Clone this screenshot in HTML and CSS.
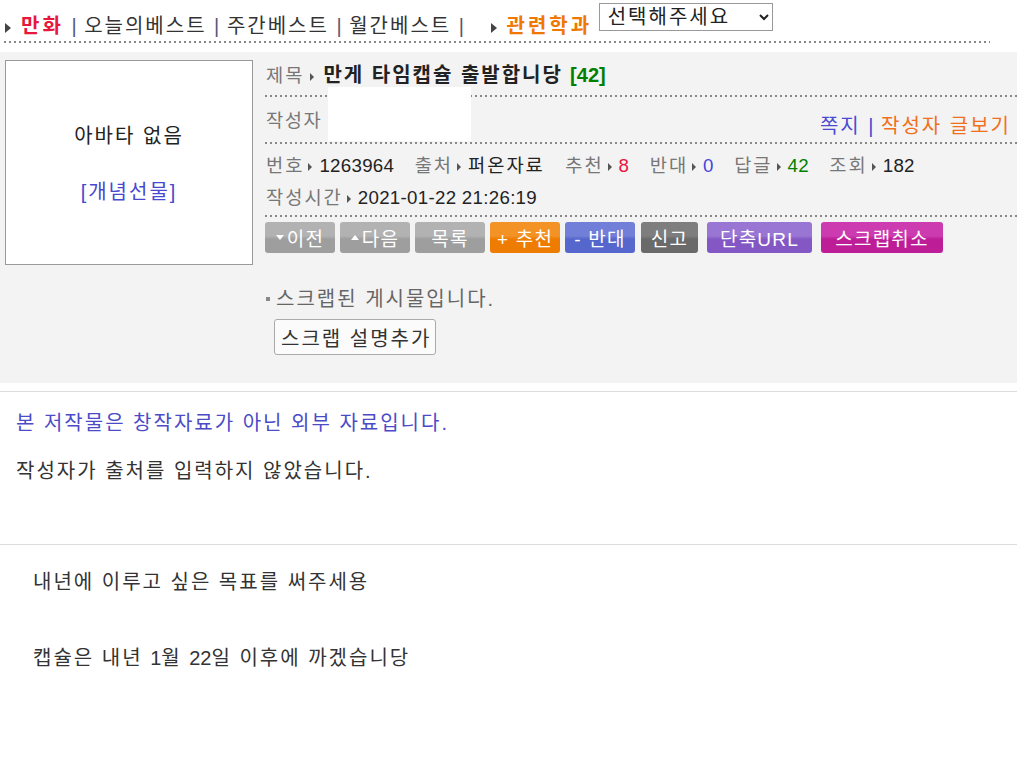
FILE: index.html
```html
<!DOCTYPE html>
<html lang="ko">
<head>
<meta charset="utf-8">
<title>만게 타임캡슐 출발합니당</title>
<link rel="stylesheet" href="styles.css">
</head>
<body>
<div class="nav">
  <span class="tri"></span><a class="nav-main">만화</a>
  <span class="sep">|</span> <a class="nav-link">오늘의베스트</a>
  <span class="sep">|</span> <a class="nav-link">주간베스트</a>
  <span class="sep">|</span> <a class="nav-link">월간베스트</a>
  <span class="sep">|</span>
  <span class="tri tri-gap"></span><a class="nav-dept">관련학과</a>
  <select class="dept-select"><option>선택해주세요</option></select>
</div>
<div class="nav-dots"></div>

<div class="panel">
  <div class="avatar">
    <div class="avatar-none">아바타 없음</div>
    <a class="gift">[개념선물]</a>
  </div>
  <div class="info">
    <div class="row-title">
      <span class="lbl">제목</span><span class="arr arr-title"></span><span class="subject">만게 타임캡슐 출발합니당</span> <span class="cnt num">[42]</span>
    </div>
    <div class="dots"></div>
    <div class="row-author">
      <span class="lbl">작성자</span>
      <span class="nick"></span>
      <span class="author-links"><a class="memo">쪽지</a> <span class="sep2">|</span> <a class="posts">작성자 글보기</a></span>
    </div>
    <div class="dots"></div>
    <div class="row-meta">
      <span class="item"><span class="lbl">번호</span><span class="arr"></span><span class="num">1263964</span></span>
      <span class="item"><span class="lbl">출처</span><span class="arr"></span>퍼온자료</span>
      <span class="item"><span class="lbl">추천</span><span class="arr"></span><span class="v-red num">8</span></span>
      <span class="item"><span class="lbl">반대</span><span class="arr"></span><span class="v-blue num">0</span></span>
      <span class="item"><span class="lbl">답글</span><span class="arr"></span><span class="v-green num">42</span></span>
      <span class="item"><span class="lbl">조회</span><span class="arr"></span><span class="num">182</span></span>
    </div>
    <div class="row-meta row-time">
      <span class="item"><span class="lbl">작성시간</span><span class="arr"></span><span class="num">2021-01-22 21:26:19</span></span>
    </div>
    <div class="dots"></div>
    <div class="btns">
      <a class="btn b-gray"><span class="mini-tri down"></span>이전</a>
      <a class="btn b-gray"><span class="mini-tri up"></span>다음</a>
      <a class="btn b-gray">목록</a>
      <a class="btn b-orange">+ 추천</a>
      <a class="btn b-blue">- 반대</a>
      <a class="btn b-dark">신고</a>
      <a class="btn b-purple">단축URL</a>
      <a class="btn b-magenta">스크랩취소</a>
    </div>
    <div class="scrap-note"><span class="sq"></span>스크랩된 게시물입니다.</div>
    <button class="scrap-btn">스크랩 설명추가</button>
  </div>
</div>

<div class="rule"></div>
<div class="source">
  <p class="src-blue">본 저작물은 창작자료가 아닌 외부 자료입니다.</p>
  <p class="src-none">작성자가 출처를 입력하지 않았습니다.</p>
</div>
<div class="rule"></div>
<div class="content">
  <p>내년에 이루고 싶은 목표를 써주세용</p>
  <p>캡슐은 내년 <span class="num">1</span>월 <span class="num">22</span>일 이후에 까겠습니당</p>
</div>
</body>
</html>
```
FILE: styles.css
```css
html, body {
  margin: 0;
  padding: 0;
  background: #fff;
}
body {
  font-family: "Liberation Sans", "Noto Sans CJK KR", sans-serif;
  font-size: 20px;
  letter-spacing: 2px;
  color: #333;
}
a { text-decoration: none; cursor: pointer; }
.num { letter-spacing: 0; }

/* top nav */
.nav {
  padding: 10px 0 0 5px;
  height: 31px;
  line-height: 32px;
  white-space: nowrap;
}
.tri {
  display: inline-block;
  width: 0;
  height: 0;
  border-top: 5px solid transparent;
  border-bottom: 5px solid transparent;
  border-left: 6px solid #444;
  margin-right: 10px;
  vertical-align: 0px;
}
.tri-gap { margin-left: 19px; }
.nav-main { color: #e8173c; font-weight: bold; letter-spacing: 3px; }
.nav-dept { color: #f07800; font-weight: bold; letter-spacing: 3px; }
.nav-link { color: #333; }
.sep { color: #557; margin: 0; letter-spacing: 0; }
.dept-select {
  vertical-align: top;
  margin: -7px 0 0 -1px;
  width: 174px;
  height: 28px;
  font-family: "Liberation Sans", "Noto Sans CJK KR", sans-serif;
  font-size: 20px;
  letter-spacing: 2px;
  color: #222;
  border: 1px solid #999;
  background: #fff;
  padding: 0 4px;
  border-radius: 0;
}
.nav-dots {
  margin: 0 0 0 4px;
  width: 986px;
  height: 2px;
  background: repeating-linear-gradient(to right, #888 0 2px, transparent 2px 5px);
}

/* panel */
.panel {
  margin-top: 9px;
  background: #f3f3f3;
  display: flex;
  align-items: flex-start;
  padding: 8px 0 28px 5px;
}
.avatar {
  width: 246px;
  height: 203px;
  background: #fff;
  border: 1px solid #999;
  display: flex;
  flex-direction: column;
  align-items: center;
  flex-shrink: 0;
}
.avatar-none {
  margin-top: 60px;
  line-height: 30px;
  color: #222;
}
.gift {
  margin-top: 26px;
  line-height: 30px;
  color: #4848d0;
}
.info {
  margin-left: 12px;
  flex: 1;
  font-size: 18.7px;
  letter-spacing: 2px;
}
.info .num { letter-spacing: 0.3px; }
.lbl { color: #777; }
.arr {
  display: inline-block;
  width: 0;
  height: 0;
  border-top: 4px solid transparent;
  border-bottom: 4px solid transparent;
  border-left: 4px solid #555;
  margin: 0 7px 0 4px;
  vertical-align: 1px;
  letter-spacing: 0;
}
.arr-title { margin: 0 9px 0 6px; }
.dots {
  height: 2px;
  background: repeating-linear-gradient(to right, #888 0 2px, transparent 2px 5px);
}
.row-title {
  height: 35px;
  line-height: 30px;
  padding-left: 1px;
}
.subject { font-size: 20px; font-weight: bold; color: #222; letter-spacing: 2px; }
.info .cnt { font-size: 20px; font-weight: bold; color: #008000; letter-spacing: 0; }
.row-author {
  display: flex;
  align-items: flex-start;
  height: 45px;
  padding-left: 1px;
  padding-right: 6px;
}
.row-author .lbl { line-height: 30px; margin-top: 9px; letter-spacing: 1.6px; }
.nick {
  width: 143px;
  height: 54px;
  background: #fff;
  margin: -10px 0 0 6px;
}
.author-links {
  margin-left: auto;
  margin-top: 15px;
  line-height: 28px;
  font-size: 20px;
  letter-spacing: 2px;
}
.memo { color: #4a4ad0; }
.sep2 { color: #4a4ad0; letter-spacing: 0; }
.posts { color: #f07020; }
.row-meta {
  padding: 6px 0 0 1px;
  height: 31px;
  line-height: 31px;
  color: #222;
  white-space: nowrap;
}
.row-time { padding-top: 1px; height: 33px; }
.item { margin-right: 13.2px; }
.v-red { color: #e8173c; }
.v-blue { color: #4444dd; }
.v-green { color: #008000; }

/* buttons */
.btns {
  display: flex;
  gap: 5px;
  margin-top: 5px;
}
.btn {
  display: flex;
  align-items: center;
  justify-content: center;
  width: 70px;
  height: 31px;
  border-radius: 3px;
  color: #fff;
  font-size: 19px;
  box-sizing: border-box;
  letter-spacing: 1.2px;
}
.b-gray { background: linear-gradient(#b2b2b2 0 45%, #9e9e9e 55% 100%); }
.b-orange { background: linear-gradient(#f39326 0 45%, #ee7c00 55% 100%); }
.b-blue { background: linear-gradient(#717fd8 0 45%, #5566cc 55% 100%); }
.b-dark { background: linear-gradient(#7e7e7e 0 45%, #6a6a6a 55% 100%); width: 57px; margin-left: 1px; }
.b-purple { background: linear-gradient(#9a76d4 0 45%, #8458c4 55% 100%); width: 105px; margin-left: 4px; }
.b-magenta { background: linear-gradient(#cc3bb0 0 45%, #bd1e98 55% 100%); width: 122px; margin-left: 4px; }
.mini-tri {
  display: inline-block;
  width: 0;
  height: 0;
  border-left: 4px solid transparent;
  border-right: 4px solid transparent;
  margin-right: 3px;
}
.mini-tri.down { border-top: 5px solid #fff; }
.mini-tri.up { border-bottom: 5px solid #fff; }

.scrap-note {
  margin-top: 31px;
  line-height: 30px;
  font-size: 20px;
  letter-spacing: 2px;
  color: #666;
  display: flex;
  align-items: center;
}
.sq {
  width: 4px;
  height: 4px;
  background: #888;
  margin: 0 6px 0 1px;
}
.scrap-btn {
  margin: 5px 0 0 9px;
  height: 36px;
  padding: 0 4px 0 6px;
  border: 1px solid #aaa;
  border-radius: 3px;
  background: #fbfbfb;
  font-family: "Liberation Sans", "Noto Sans CJK KR", sans-serif;
  font-size: 20px;
  letter-spacing: 2px;
  color: #333;
}

/* body */
.rule {
  height: 1px;
  background: #dcdcdc;
  margin-top: 8px;
}
.source {
  padding: 16px 0 0 16px;
  height: 144px;
  box-sizing: border-box;
}
.source p {
  margin: 0;
  line-height: 30px;
}
.source .src-none { margin-top: 18px; color: #333; }
.src-blue { color: #4b4bc8; }
.content {
  padding: 22px 0 0 33px;
}
.content p {
  margin: 0 0 46px;
  line-height: 30px;
  color: #333;
}
```
